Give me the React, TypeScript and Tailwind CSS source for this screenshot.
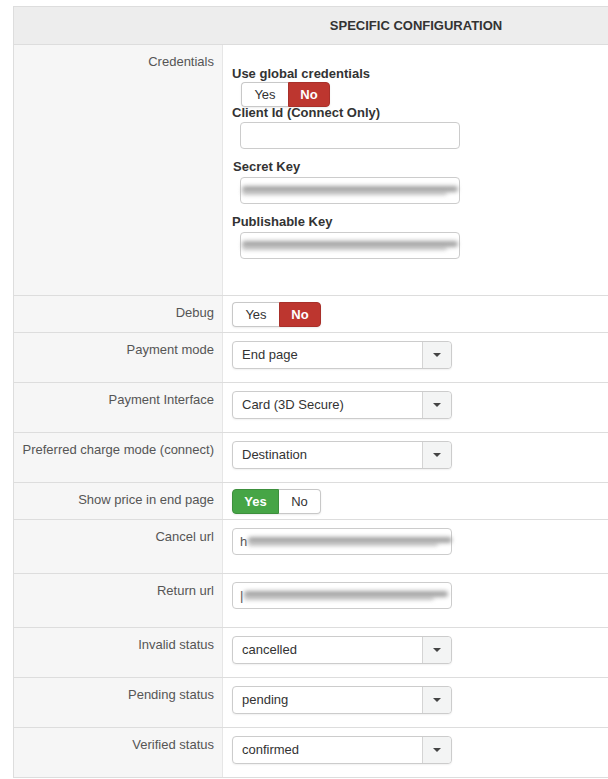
import React from "react";

function Toggle({ value, className = "" }: { value: "yes" | "no"; className?: string }) {
  return (
    <div className={`flex h-[25px] w-[89px] text-[13px] leading-none rounded-[4px] shadow-[0_1px_2px_rgba(0,0,0,0.08)] ${className}`}>
      <div
        className={
          value === "yes"
            ? "w-[47px] flex items-center justify-center rounded-l-[4px] bg-[#46a546] border border-[#3d8f3d] text-white font-bold"
            : "w-[47px] flex items-center justify-center rounded-l-[4px] bg-white border border-[#c8c8c8] border-r-0 text-[#333]"
        }
      >
        Yes
      </div>
      <div
        className={
          value === "no"
            ? "flex-1 flex items-center justify-center rounded-r-[4px] bg-[#bd362f] border border-[#a8302a] text-white font-bold"
            : "flex-1 flex items-center justify-center rounded-r-[4px] bg-white border border-[#c8c8c8] border-l-0 text-[#333]"
        }
      >
        No
      </div>
    </div>
  );
}

function Select({ value }: { value: string }) {
  return (
    <div className="flex h-[28px] w-[220px] border border-[#cccccc] rounded-[4px] bg-white shadow-[0_1px_2px_rgba(0,0,0,0.06)]">
      <div className="flex-1 flex items-center pl-[9px] text-[13px] text-[#333]">{value}</div>
      <div className="w-[29px] flex items-center justify-center bg-[#f3f4f4] border-l border-[#d4d4d4] rounded-r-[4px]">
        <svg width="8" height="4" viewBox="0 0 8 4">
          <path d="M0 0 L8 0 L4 4 Z" fill="#444" />
        </svg>
      </div>
    </div>
  );
}

function Blur({ w, h = 5, className = "" }: { w: number; h?: number; className?: string }) {
  return (
    <div
      className={`rounded-full bg-[#a3a3a3] blur-[2px] ${className}`}
      style={{ width: w, height: h }}
    />
  );
}

function TextInput({ blurred, lead, className = "" }: { blurred?: boolean; lead?: string; className?: string }) {
  return (
    <div className={`relative flex items-center h-[27px] w-[220px] border border-[#cccccc] rounded-[4px] bg-white overflow-visible ${className}`}>
      {lead && <span className="pl-[7px] text-[13px] text-[#555] leading-none">{lead}</span>}
      {blurred && (
        <div className="flex flex-col gap-0 ml-[1px]">
          <Blur w={lead ? 204 : 216} h={6} />
          <Blur w={lead ? 190 : 205} h={4} className="opacity-60 -mt-[1px]" />
        </div>
      )}
    </div>
  );
}

function Row({
  label,
  children,
  className = "",
  rightClass = "",
}: {
  label: string;
  children: React.ReactNode;
  className?: string;
  rightClass?: string;
}) {
  return (
    <div className={`flex border-b border-[#dddddd] ${className}`}>
      <div className="w-[209px] shrink-0 bg-[#f6f6f6] border-r border-[#e6e6e6] text-right pr-[8px] pt-[8px] text-[13px] leading-[18px] text-[#555]">
        {label}
      </div>
      <div className={`flex-1 bg-white pl-[9px] ${rightClass}`}>{children}</div>
    </div>
  );
}

export default function App() {
  return (
    <div className="w-[608px] h-[779px] bg-white overflow-hidden pt-[6px] pl-[13px] font-['Liberation_Sans',Arial,sans-serif]">
      <div className="border-l border-t border-[#dddddd] w-[620px]">
        <div className="flex h-[38px] bg-[#ededed] border-b border-[#dddddd]">
          <div className="w-[209px] shrink-0" />
          <div className="w-[386px] flex items-center justify-center text-[13px] font-bold text-[#333]">
            SPECIFIC CONFIGURATION
          </div>
        </div>

        <Row label="Credentials" className="h-[251px]" rightClass="pt-[21px]">
          <div className="text-[13px] font-bold text-[#333] leading-[16px]">Use global credentials</div>
          <Toggle value="no" className="ml-[9px]" />
          <div className="mt-[-2px] text-[13px] font-bold text-[#333] leading-[16px]">Client Id (Connect Only)</div>
          <TextInput className="ml-[8px] mt-[1px]" />
          <div className="mt-[10px] ml-[1px] text-[13px] font-bold text-[#333] leading-[16px]">Secret Key</div>
          <TextInput className="ml-[8px] mt-[2px]" blurred />
          <div className="mt-[10px] text-[13px] font-bold text-[#333] leading-[16px]">Publishable Key</div>
          <TextInput className="ml-[8px] mt-[2px]" blurred />
        </Row>

        <Row label="Debug" className="h-[37px]" rightClass="pt-[6px]">
          <Toggle value="no" />
        </Row>
        <Row label="Payment mode" className="h-[50px]" rightClass="pt-[8px] pl-[8px]">
          <Select value="End page" />
        </Row>
        <Row label="Payment Interface" className="h-[50px]" rightClass="pt-[8px] pl-[8px]">
          <Select value="Card (3D Secure)" />
        </Row>
        <Row label="Preferred charge mode (connect)" className="h-[50px]" rightClass="pt-[8px] pl-[8px]">
          <Select value="Destination" />
        </Row>
        <Row label="Show price in end page" className="h-[37px]" rightClass="pt-[6px]">
          <Toggle value="yes" />
        </Row>
        <Row label="Cancel url" className="h-[54px]" rightClass="pt-[8px] pl-[8px]">
          <TextInput blurred lead="h" />
        </Row>
        <Row label="Return url" className="h-[54px]" rightClass="pt-[8px] pl-[8px]">
          <TextInput blurred lead="|" />
        </Row>
        <Row label="Invalid status" className="h-[50px]" rightClass="pt-[8px] pl-[8px]">
          <Select value="cancelled" />
        </Row>
        <Row label="Pending status" className="h-[50px]" rightClass="pt-[8px] pl-[8px]">
          <Select value="pending" />
        </Row>
        <Row label="Verified status" className="h-[50px]" rightClass="pt-[8px] pl-[8px]">
          <Select value="confirmed" />
        </Row>
      </div>
    </div>
  );
}
